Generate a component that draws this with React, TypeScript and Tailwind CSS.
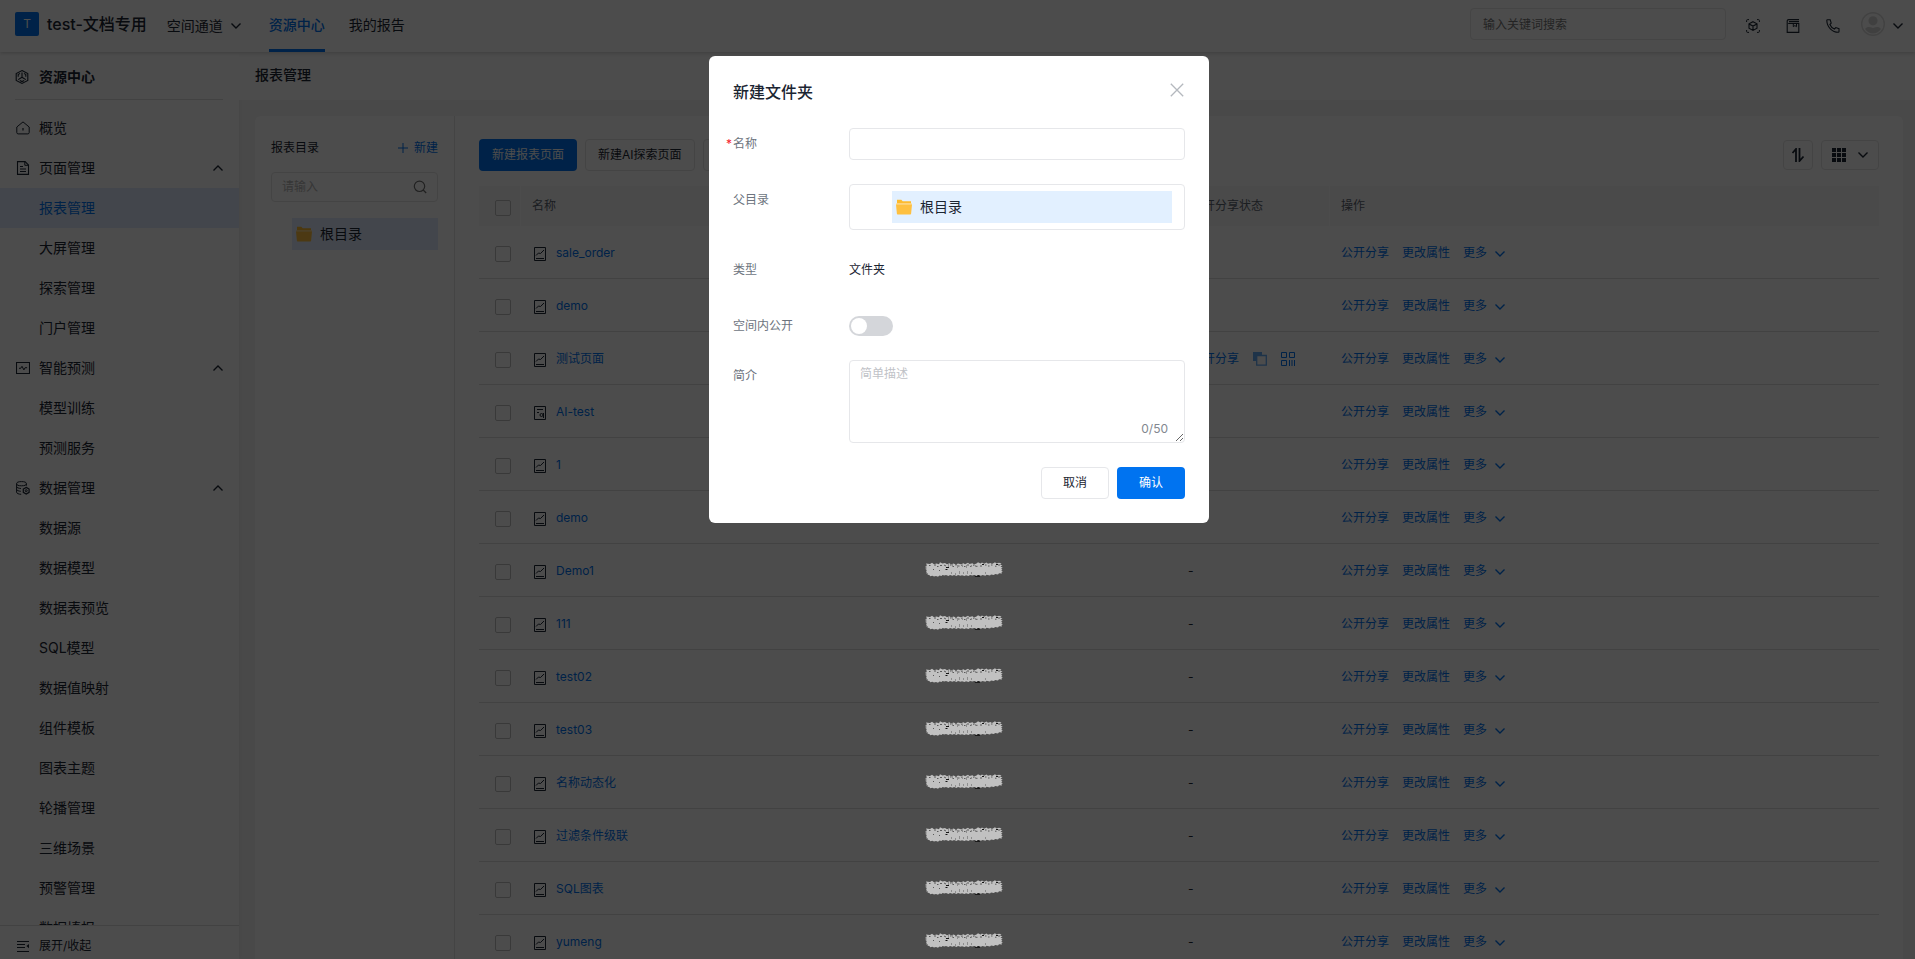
import type { ReactNode } from 'react';

type IconProps = { className?: string };

function Icon({ className = '', size = 'size-[14px]', children }: IconProps & { size?: string; children: ReactNode }) {
  return (
    <svg viewBox="0 0 14 14" fill="none" stroke="currentColor" aria-hidden="true" className={`${size} shrink-0 ${className}`}>
      {children}
    </svg>
  );
}

const ChevronDown = ({ className }: IconProps) => (
  <svg viewBox="0 0 10 6" fill="none" stroke="currentColor" strokeWidth="1.4" aria-hidden="true" className={`h-[6px] w-[10px] shrink-0 ${className ?? ''}`}>
    <path d="M0.5 0.5 5 5 9.5 0.5" />
  </svg>
);

const ChevronUp = ({ className }: IconProps) => (
  <svg viewBox="0 0 10 6" fill="none" stroke="currentColor" strokeWidth="1.3" aria-hidden="true" className={`h-[6px] w-[10px] shrink-0 ${className ?? ''}`}>
    <path d="M0.5 5.5 5 1 9.5 5.5" />
  </svg>
);

const HexIcon = () => (
  <Icon>
    <path d="M7 .6 12.8 3.5v7L7 13.4 1.2 10.5v-7z" strokeWidth="1.1" />
    <path d="M7 2.6v4.6M7 7.2 3.2 9.6M7 7.2l3.8 2.4M5 3.4 3.2 4.6v2.2M9 3.4l1.8 1.2v2.2M4.8 10.6l2.2 1 2.2-1" strokeWidth="1.1" />
  </Icon>
);
const HomeIcon = () => (
  <Icon>
    <path d="M.8 6 7 .9 13.2 6v5.6c0 .8-.6 1.3-1.3 1.3H2.1c-.7 0-1.3-.5-1.3-1.3z" />
    <path d="M7 7v2.6" strokeWidth="1.2" />
  </Icon>
);
const PageIcon = () => (
  <Icon>
    <path d="M1.5.6h7.6l3.4 3.4v9.4h-11z" strokeWidth="1.1" />
    <path d="M8.8.8v3.5h3.5M4 5.5h3M4 8h6M4 10.500h6" />
  </Icon>
);
const PulseIcon = () => (
  <Icon>
    <path d="M.5 1.500h13v11H.5z" strokeWidth="1.1" />
    <path d="M3 7.300h1.700l1.300-2 1.900 3.600 1.200-2.200h2" />
  </Icon>
);
const DatabaseIcon = () => (
  <Icon>
    <ellipse cx="5.5" cy="2.7" rx="4.9" ry="2.1" />
    <path d="M.6 2.700v8.500c0 1.200 2 2 4.600 2.100M10.400 2.700v2M.6 5.700c.4 1 1.800 1.600 4.400 1.800M.6 8.500c.4 1 1.800 1.600 4.200 1.800" />
    <path d="m10.200 6.400 2.900 1.600v3.400L10.200 13l-2.900-1.600V8z" strokeWidth="1.200" />
    <circle cx="10.200" cy="9.700" r="1" />
  </Icon>
);
const FoldIcon = () => (
  <Icon>
    <path d="M1 2.500h12M1 5.500h8M1 8.500h8M1 12.500h12" />
    <path d="M13 5v4.200L10.400 7z" fill="currentColor" stroke="none" />
  </Icon>
);
const ScanIcon = () => (
  <Icon>
    <path d="M.6 3V1.600a1 1 0 0 1 1-1H3M11 .6h1.400a1 1 0 0 1 1 1V3M13.400 11v1.400a1 1 0 0 1-1 1H11M3 13.400H1.600a1 1 0 0 1-1-1V11" />
    <path d="m7 2.700 4 2.100v4.400l-4 2.200-4-2.200V4.800zM3 4.900l4 2.200 4-2.200M7 7.100v4.200" strokeWidth="1.100" />
  </Icon>
);
const BookIcon = () => (
  <Icon>
    <path d="M13 .6H2.600a1.400 1.400 0 0 0-1.400 1.400v11.400h11.600V4.500H2.200M3 2.600h10" strokeWidth="1.100" />
    <path d="M7.300 4.500v3.200l1.600-1.100 1.600 1.100V4.500" />
  </Icon>
);
const PhoneIcon = () => (
  <Icon>
    <path d="M1.400.8h2.800l1 3.400-1.300 1.300c.8 2 2.500 3.700 4.500 4.500l1.400-1.400 3.200 1.100v2.900c0 .4-.3.700-.7.700C6.200 13.300 1 8 .8 1.500c0-.4.2-.7.6-.7z" strokeWidth="1.100" />
  </Icon>
);
const PlusIcon = () => (
  <svg viewBox="0 0 10 10" fill="none" stroke="currentColor" aria-hidden="true" className="size-[10px]">
    <path d="M5 0v10M0 5h10" />
  </svg>
);
const SearchIcon = () => (
  <Icon className="text-[#707070]">
    <circle cx="6.500" cy="6.300" r="5.200" strokeWidth="1.200" />
    <path d="m10.200 10 3 3" strokeWidth="1.200" />
  </Icon>
);
const FolderIcon = () => (
  <svg viewBox="0 0 16 16" aria-hidden="true" className="size-4 shrink-0">
    <path d="M1 .8h4.300l1.400 1.500H15v3H1z" fill="#fdbb2f" />
    <path d="M0 4.300h16v1.500H0z" fill="#ffdf9b" />
    <path d="M0 5.500h16l-.9 9.200a.8.8 0 0 1-.8.800H1.700a.8.8 0 0 1-.8-.8z" fill="#fec040" />
  </svg>
);
const ReportIcon = () => (
  <svg viewBox="0 0 12 14" fill="none" stroke="currentColor" aria-hidden="true" className="h-[14px] w-3 shrink-0">
    <path d="M.5.500h11v13H.500zM2 11.500h8" />
    <path d="M2 8.500 4.500 6l2 .5L10 3" />
  </svg>
);
const ExploreIcon = () => (
  <svg viewBox="0 0 12 14" fill="none" stroke="currentColor" aria-hidden="true" className="h-[14px] w-3 shrink-0">
    <path d="M.5.500h11v13H.500zM3 3.500h6M3 6.500h2" />
    <circle cx="7.500" cy="9" r="1.500" />
    <path d="M9.500 7v5" />
  </svg>
);
const CopyIcon = () => (
  <Icon>
    <path d="M0 0h9v3.500H3.500V9H0z" fill="currentColor" stroke="none" />
    <path d="M3.700 3.500h9.600v9.700H3.700z" strokeWidth="1.300" />
  </Icon>
);
const QrIcon = () => (
  <Icon>
    <path d="M.500.500h5v5h-5zM8.500.500h5v5h-5zM.500 8.500h5v5h-5zM8.500 8v6M11 8v6M13.500 8v6" />
  </Icon>
);

/* Brush stroke that hides an account name. */
const Redaction = () => (
  <svg viewBox="0 0 78 15" aria-hidden="true" className="relative z-30 -mt-[2px] block h-[15px] w-[78px]">
    <path d="M49 12h6v2.800h-5z" fill="#0a0a0a" />
    <path
      fill="#c1c1c1"
      d="M1 1.500 5 2 7 .8 9 2.200 11.500 1.500 14 2.300 15 .3 17.500 1.600 20 1 22 2.200 24.500 1.300 26 2.600 28.500 1.500 31 2.400 33 1.600 36 2.300 38.500 1.200 40 2.200 43 .8 44.500 2 47.500 1.300 49 2.400 51.500 1.500 53 .3 55.500 1.500 57 .4 59 1.700 61.500 .5 63 1.800 65.500 1 67 2 70 .3 71.500 1.600 74 .8 76.500 1.500 75 2.800 77.500 3.300 75.500 4.400 77.800 5.400 76 6.300 77.400 7.300 76.200 8.200 77.800 9.400 76.500 10 77 11.500 74 11.200 73 12.500 70 12 69 13 66 12.500 65 13.500 61.500 12.800 60.500 13.800 57.500 13 56 13.700 53 13 51.500 14 49 13 47.500 13.600 45 13 43.500 14 41 13.200 39.500 13.900 37 13.200 35.500 13.800 33 13.100 31.500 13.900 29 13 27.500 13.800 25 13 23.500 13.900 21 13 19.500 13.600 17.500 13 16.500 14 14.500 13.500 13 14.800 11 13.900 9 14.600 7.500 13.700 5 14.300 4.500 13 2.500 12.800 3 11.500 1 11.200 2 10 .8 9.300 2 8.300 .4 7.700 2 6.900 0 6 2 5.100 0 4.200 2 3.500z"
    />
    <path
      stroke="#5a5a5a"
      strokeWidth="1"
      d="M4 3.500h1.500M9 3h2M12 4.500h1.500M15 3.500h2M19 3l2 1M25 3h1.500M28 4.500h1M30 2.800h2M33 4h1.500M36 3.200h2M39 4.500h1.500M42 3h2M45 4.400h1M48 3.200h1.500M51 4.300h1.500M55 4h2M60 3h1.500M63 4h1.500M66 3h1.500M70 4.200h1.500M73 3h2M8 7.500h1M14 8.500h1"
    />
    <path stroke="#8d8d8d" strokeWidth="1" d="M23.500 2v3M27.500 2v3M32.500 3v3M37.500 3v2M41.500 3v3M46.500 3v2M50.500 3v2M26.500 10v2M30.500 11v2M34.500 9v3M38.500 10v2M42.500 9v3M46.500 10v2M60.500 10v2" />
    <path stroke="#161616" strokeWidth="1" d="M21 5.500h3M20.500 7.500h2M57 2.500h2M71 2.500h2" />
  </svg>
);

/* Lower ends of an account name whose row is mostly covered by the dialog. */
const NameTail = () => (
  <svg viewBox="0 0 78 14" aria-hidden="true" className="mt-[-2px] block h-[14px] w-[78px]">
    <path d="M11 13.500h3M50 13.500h5" stroke="#000" />
  </svg>
);

type NavItem = { label: string; icon?: ReactNode; group?: boolean; active?: boolean };

const navItems: NavItem[] = [
  { label: '概览', icon: <HomeIcon /> },
  { label: '页面管理', icon: <PageIcon />, group: true },
  { label: '报表管理', active: true },
  { label: '大屏管理' },
  { label: '探索管理' },
  { label: '门户管理' },
  { label: '智能预测', icon: <PulseIcon />, group: true },
  { label: '模型训练' },
  { label: '预测服务' },
  { label: '数据管理', icon: <DatabaseIcon />, group: true },
  { label: '数据源' },
  { label: '数据模型' },
  { label: '数据表预览' },
  { label: 'SQL模型' },
  { label: '数据值映射' },
  { label: '组件模板' },
  { label: '图表主题' },
  { label: '轮播管理' },
  { label: '三维场景' },
  { label: '预警管理' },
  { label: '数据填报' },
];

type Row = { name: string; kind?: 'explore'; owner?: 'tail' | 'redacted'; status?: 'shared' | 'none' };

const rows: Row[] = [
  { name: 'sale_order' },
  { name: 'demo' },
  { name: '测试页面', status: 'shared' },
  { name: 'AI-test', kind: 'explore' },
  { name: '1' },
  { name: 'demo', owner: 'tail' },
  { name: 'Demo1', owner: 'redacted', status: 'none' },
  { name: '111', owner: 'redacted', status: 'none' },
  { name: 'test02', owner: 'redacted', status: 'none' },
  { name: 'test03', owner: 'redacted', status: 'none' },
  { name: '名称动态化', owner: 'redacted', status: 'none' },
  { name: '过滤条件级联', owner: 'redacted', status: 'none' },
  { name: 'SQL图表', owner: 'redacted', status: 'none' },
  { name: 'yumeng', owner: 'redacted', status: 'none' },
];

const checkboxClass = 'block size-4 appearance-none rounded-xs border border-[#bfbfbf]';

function Header() {
  return (
    <header className="relative z-10 flex h-[52px] shrink-0 items-center bg-white pr-3 pl-[15px] text-sm shadow-[0_1px_4px_rgba(0,0,0,0.2)]">
      <div className="mb-1 flex size-6 items-center justify-center rounded-xs bg-[#0073f0] text-xs text-white">T</div>
      <h1 className="mb-1 ml-2 text-base font-medium">test-文档专用</h1>
      <button type="button" className="ml-5 flex items-center gap-2">
        空间通道
        <ChevronDown />
      </button>
      <nav className="ml-7 flex h-full gap-6">
        <a href="#resources" className="flex items-center border-b-3 border-[#0073f0] font-medium text-[#0073f0]">
          资源中心
        </a>
        <a href="#reports" className="flex items-center border-b-3 border-transparent">
          我的报告
        </a>
      </nav>
      <input
        type="search"
        aria-label="输入关键词搜索"
        placeholder="输入关键词搜索"
        className="mb-1 ml-auto h-8 w-64 rounded-sm border border-[#e6e6e6] px-3 text-xs placeholder:text-[#777]"
      />
      <div className="ml-5 flex items-center gap-[26px]">
        <button type="button" aria-label="扫描"><ScanIcon /></button>
        <button type="button" aria-label="文档"><BookIcon /></button>
        <button type="button" aria-label="电话"><PhoneIcon /></button>
      </div>
      <button type="button" aria-label="账户" className="ml-[21px] flex items-center gap-2">
        <svg viewBox="0 0 24 24" aria-hidden="true" className="mb-1 size-6">
          <circle cx="12" cy="12" r="11.300" fill="none" stroke="#dcdcdc" strokeWidth="1.400" />
          <circle cx="12" cy="8.800" r="4.600" fill="#d8d8d8" />
          <path d="M4 17c2-2.600 4.500-2.400 8-1 3.500-1.400 6-1.600 8 1a9.500 9.500 0 0 1-16 0z" fill="#d8d8d8" />
        </svg>
        <ChevronDown />
      </button>
    </header>
  );
}

function Sidebar() {
  return (
    <aside className="flex w-[239px] shrink-0 flex-col bg-white text-sm shadow-[1px_0_6px_rgba(0,0,0,0.06)]">
      <div className="mr-4 mb-2 ml-[15px] flex h-12 shrink-0 items-center gap-[10px] border-b border-[#dedede] pt-[2px] font-semibold">
        <HexIcon />
        资源中心
      </div>
      <nav className="min-h-0 flex-1 overflow-hidden">
        <ul>
          {navItems.map((item) => (
            <li key={item.label}>
              <a
                href="#nav"
                className={
                  item.active
                    ? 'flex h-10 items-center gap-[9px] bg-[#e0ecfd] px-4 text-[#0073f0]'
                    : 'flex h-10 items-center gap-[9px] px-4'
                }
              >
                <span className="flex w-[14px] justify-center">{item.icon}</span>
                <span className="flex-1">{item.label}</span>
                {item.group && <ChevronUp />}
              </a>
            </li>
          ))}
        </ul>
      </nav>
      <button type="button" className="flex h-[34px] shrink-0 items-center gap-[9px] border-t border-[#dedede] px-4 pt-[6px] text-xs">
        <FoldIcon />
        展开/收起
      </button>
    </aside>
  );
}

function Directory() {
  return (
    <section className="w-[200px] shrink-0 border-r border-[#e3e3e3] px-4 pt-5">
      <div className="flex h-6 items-center justify-between text-xs">
        <h3>报表目录</h3>
        <button type="button" className="flex items-center gap-[6px] text-[#0073f0]">
          <PlusIcon />
          新建
        </button>
      </div>
      <div className="mt-3 flex h-[30px] items-center rounded-sm border border-[#e3e3e3] px-[10px]">
        <input type="text" aria-label="请输入" placeholder="请输入" className="min-w-0 flex-1 text-xs placeholder:text-[#b5b5b5]" />
        <SearchIcon />
      </div>
      <div className="mt-4 ml-[21px] flex h-8 items-center gap-2 bg-[#e0ecfd] px-1 text-sm">
        <FolderIcon />
        根目录
      </div>
    </section>
  );
}

function ReportTable() {
  return (
    <table className="mt-[15px] w-full table-fixed border-separate border-spacing-0 text-left text-xs">
      <colgroup>
        <col className="w-[42px]" />
        <col className="w-[393px]" />
        <col className="w-[266px]" />
        <col className="w-[150px]" />
        <col />
      </colgroup>
      <thead>
        <tr className="h-10 bg-[#f8f8f8] text-[#5b6470]">
          <th className="border-r border-white px-4 pt-1">
            <input type="checkbox" aria-label="全选" className={checkboxClass} />
          </th>
          <th className="px-[11px] font-normal">名称</th>
          <th className="px-[11px] font-normal" />
          <th className="border-r border-white px-[11px] font-normal">公开分享状态</th>
          <th className="px-[11px] font-normal">操作</th>
        </tr>
      </thead>
      <tbody>
        {rows.map((row, index) => (
          <tr key={index} className="h-[53px]">
            <td className="border-b border-[#dedede] px-4 pt-1">
              <input type="checkbox" aria-label={row.name} className={checkboxClass} />
            </td>
            <td className="border-b border-[#dedede] px-[13px] pt-[2px]">
              <a href="#report" className="flex items-center gap-[10px] text-[#0073f0]">
                <span className="pt-[2px] text-[#1b2532]">{row.kind === 'explore' ? <ExploreIcon /> : <ReportIcon />}</span>
                {row.name}
              </a>
            </td>
            <td className="border-b border-[#dedede] px-[11px]">
              {row.owner === 'redacted' && <Redaction />}
              {row.owner === 'tail' && <NameTail />}
            </td>
            <td className="border-b border-[#dedede] px-2 pt-[2px]">
              {row.status === 'none' && '-'}
              {row.status === 'shared' && (
                <div className="ml-[3px] flex items-center gap-[14px] text-[#0073f0]">
                  <a href="#share">公开分享</a>
                  <button type="button" aria-label="复制" className="opacity-60"><CopyIcon /></button>
                  <button type="button" aria-label="二维码"><QrIcon /></button>
                </div>
              )}
            </td>
            <td className="border-b border-[#dedede] px-[11px] pt-[2px]">
              <div className="flex items-center gap-[13px] text-[#0073f0]">
                <a href="#share">公开分享</a>
                <a href="#attributes">更改属性</a>
                <button type="button" className="flex items-center gap-2">
                  更多
                  <ChevronDown className="mt-[2px]" />
                </button>
              </div>
            </td>
          </tr>
        ))}
      </tbody>
    </table>
  );
}

function FolderDialog() {
  const labelClass = 'w-[116px] shrink-0 text-xs leading-8 text-[#6d747e]';
  return (
    <div className="fixed inset-0 z-20 flex items-start justify-center bg-black/70 pt-14 pl-[3px]">
      <form role="dialog" aria-labelledby="dialog-title" className="w-[500px] rounded-md bg-white p-6">
        <div className="flex h-6 items-center justify-between">
          <h2 id="dialog-title" className="text-base font-medium">新建文件夹</h2>
          <button type="button" aria-label="关闭" className="mb-1 text-[#b4b8be]">
            <svg viewBox="0 0 14 14" fill="none" stroke="currentColor" strokeWidth="1.300" className="mr-px size-[14px]">
              <path d="m.8.800 12.400 12.400M13.200.800.800 13.200" />
            </svg>
          </button>
        </div>

        <div className="mt-6 flex flex-col gap-6">
          <div className="flex">
            <label htmlFor="folder-name" className="-ml-[7px] flex w-[123px] shrink-0 text-xs leading-8 text-[#6d747e]">
              <span className="w-[7px] text-[#f5222d]">*</span>
              名称
            </label>
            <input id="folder-name" type="text" className="h-8 min-w-0 flex-1 rounded-sm border border-[#e6e7ea] px-3 text-xs" />
          </div>

          <div className="flex">
            <span className={labelClass}>父目录</span>
            <div className="flex-1 rounded-sm border border-[#e6e7ea] py-[6px] pr-3 pl-[42px]">
              <div className="flex h-8 items-center gap-2 bg-[#e2f0ff] px-1 text-sm">
                <FolderIcon />
                根目录
              </div>
            </div>
          </div>

          <div className="flex text-xs leading-8">
            <span className={labelClass}>类型</span>
            <span>文件夹</span>
          </div>

          <div className="flex items-center">
            <label htmlFor="folder-public" className={labelClass}>空间内公开</label>
            <input
              id="folder-public"
              type="checkbox"
              role="switch"
              className="flex h-5 w-11 appearance-none items-center rounded-full bg-[#d4d6da] px-[2px] before:size-4 before:rounded-full before:bg-white before:content-['']"
            />
          </div>
        </div>

        <div className="mt-[18px] flex">
          <label htmlFor="folder-note" className={labelClass}>简介</label>
          <div className="relative flex flex-1">
            <textarea
              id="folder-note"
              placeholder="简单描述"
              className="h-[83px] w-full rounded-sm border border-[#e6e7ea] px-[10px] py-[5px] text-xs placeholder:text-[#bfc2c7]"
            />
            <span className="absolute right-[17px] bottom-[6px] text-xs text-[#82878f]">0/50</span>
          </div>
        </div>

        <div className="mt-6 flex justify-end gap-2 text-xs">
          <button type="button" className="h-8 w-[68px] rounded-sm border border-[#e6e7ea]">取消</button>
          <button type="submit" className="h-8 w-[68px] rounded-sm bg-[#0073f0] text-white">确认</button>
        </div>
      </form>
    </div>
  );
}

export default function App() {
  return (
    <div className="flex h-screen flex-col overflow-hidden bg-[#f6f6f6] font-[Inter,'Noto_Sans_CJK_SC',sans-serif] text-[#1b2532]">
      <Header />
      <div className="flex min-h-0 flex-1">
        <Sidebar />
        <main className="flex min-w-0 flex-1 flex-col">
          <h2 className="flex h-12 shrink-0 items-center bg-[#fdfdfd] px-4 pb-[2px] text-sm font-medium">报表管理</h2>
          <div className="mt-4 mr-3 ml-4 flex min-h-0 flex-1 overflow-hidden rounded-t-md bg-white">
            <Directory />
            <section className="min-w-0 flex-1 px-6 pt-[23px]">
              <div className="flex items-center gap-2 text-xs">
                <button type="button" className="h-8 rounded-sm bg-[#0073f0] px-[13px] text-white">新建报表页面</button>
                <button type="button" className="h-8 rounded-sm border border-[#e3e3e3] px-3">新建AI探索页面</button>
                <button type="button" aria-label="新建文件夹" className="h-8 w-[86px] rounded-sm border border-[#e3e3e3]" />
                <button type="button" aria-label="排序" className="ml-auto flex size-[30px] items-center justify-center rounded-sm border border-[#e3e3e3]">
                  <Icon>
                    <path d="M1.500 5 5 1v13M8.500 0v13L12.500 8.500" strokeWidth="1.800" />
                  </Icon>
                </button>
                <button type="button" aria-label="视图" className="flex h-[30px] w-[58px] items-center justify-center gap-3 rounded-sm border border-[#e3e3e3]">
                  <Icon>
                    <path d="M0 0h4v4H0zM5 0h4v4H5zM10 0h4v4h-4zM0 5h4v4H0zM5 5h4v4H5zM10 5h4v4h-4zM0 10h4v4H0zM5 10h4v4H5zM10 10h4v4h-4z" fill="currentColor" stroke="none" />
                  </Icon>
                  <ChevronDown />
                </button>
              </div>
              <ReportTable />
            </section>
          </div>
        </main>
      </div>
      <FolderDialog />
    </div>
  );
}
